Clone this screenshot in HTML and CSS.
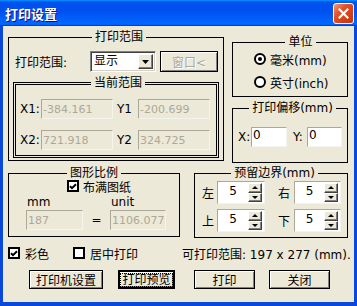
FILE: index.html
```html
<!DOCTYPE html>
<html lang="zh-CN">

<head>
	<meta charset="UTF-8">
	<title>打印设置</title>
	<link rel="stylesheet" href="styles.css">
</head>

<body>

	<div class="window">

	<!-- Title bar -->
	<div class="titlebar">
		<span class="title">打印设置</span>
		<span class="close-btn">
			<svg width="11" height="11" viewBox="0 0 11 11"><path d="M1.5 1.5L9.5 9.5M9.5 1.5L1.5 9.5" stroke="#fff" stroke-width="2.2" stroke-linecap="square"/></svg>
		</span>
	</div>

	<div class="client">

	<!-- Print range / unit / offset -->
	<div class="top-section">
		<fieldset class="group group-range">
			<legend>打印范围</legend>
			<div class="range-row">
				<span class="range-label">打印范围:</span>
				<div class="combo">
					<span class="combo-text">显示</span>
					<span class="combo-btn"><svg width="7" height="4" viewBox="0 0 7 4"><path d="M0 0H7L3.5 4Z" fill="#000"/></svg></span>
				</div>
				<button class="btn btn-window" disabled>窗口&lt;</button>
			</div>
			<fieldset class="group group-current">
				<legend>当前范围</legend>
				<div class="coord-row">
					<span class="coord-label">X1:</span>
					<input class="field field-off coord-field" value="-384.161" disabled>
					<span class="coord-label coord-label-y">Y1</span>
					<input class="field field-off coord-field" value="-200.699" disabled>
				</div>
				<div class="coord-row coord-row-2">
					<span class="coord-label">X2:</span>
					<input class="field field-off coord-field" value="721.918" disabled>
					<span class="coord-label coord-label-y">Y2</span>
					<input class="field field-off coord-field" value="324.725" disabled>
				</div>
			</fieldset>
		</fieldset>

		<div class="right-col">
			<fieldset class="group group-unit">
				<legend>单位</legend>
				<div class="radio-row"><span class="radio radio-on"></span>毫米(mm)</div>
				<div class="radio-row radio-row-2"><span class="radio"></span>英寸(inch)</div>
			</fieldset>
			<fieldset class="group group-offset">
				<legend>打印偏移(mm)</legend>
				<div class="offset-row">
					<span class="offset-label">X:</span>
					<input class="field offset-field" value="0">
					<span class="offset-label offset-label-y">Y:</span>
					<input class="field offset-field offset-field-y" value="0">
				</div>
			</fieldset>
		</div>
	</div>

	<!-- Scale / margins -->
	<div class="mid-section">
		<fieldset class="group group-scale">
			<legend>图形比例</legend>
			<div class="fit-row">
				<span class="check"><svg width="8" height="7" viewBox="0 0 8 7"><path d="M1 3.2L3 5.2L7 1.2" fill="none" stroke="#000" stroke-width="2"/></svg></span>
				布满图纸
			</div>
			<div class="scale-row">
				<div class="scale-col scale-col-mm">
					<span class="scale-unit">mm</span>
					<input class="field field-off scale-field" value="187" disabled>
				</div>
				<span class="equals">=</span>
				<div class="scale-col">
					<span class="scale-unit">unit</span>
					<input class="field field-off scale-field scale-field-unit" value="1106.077" disabled>
				</div>
			</div>
		</fieldset>

		<fieldset class="group group-margin">
			<legend>预留边界(mm)</legend>
			<div class="margin-row">
				<span class="margin-label">左</span>
				<div class="spin"><span class="spin-val">5</span><span class="spin-btns"><span class="spin-btn spin-up"></span><span class="spin-btn spin-down"></span></span></div>
				<span class="margin-label margin-label-r">右</span>
				<div class="spin spin-r"><span class="spin-val">5</span><span class="spin-btns"><span class="spin-btn spin-up"></span><span class="spin-btn spin-down"></span></span></div>
			</div>
			<div class="margin-row margin-row-2">
				<span class="margin-label">上</span>
				<div class="spin"><span class="spin-val">5</span><span class="spin-btns"><span class="spin-btn spin-up"></span><span class="spin-btn spin-down"></span></span></div>
				<span class="margin-label margin-label-r">下</span>
				<div class="spin spin-r"><span class="spin-val">5</span><span class="spin-btns"><span class="spin-btn spin-up"></span><span class="spin-btn spin-down"></span></span></div>
			</div>
		</fieldset>
	</div>

	<!-- Options -->
	<div class="options-row">
		<span class="opt opt-color">
			<span class="check"><svg width="8" height="7" viewBox="0 0 8 7"><path d="M1 3.2L3 5.2L7 1.2" fill="none" stroke="#000" stroke-width="2"/></svg></span>
			彩色
		</span>
		<span class="opt opt-center"><span class="check"></span>居中打印</span>
		<span class="printable">可打印范围: 197 x 277 (mm).</span>
	</div>

	<!-- Buttons -->
	<div class="button-row">
		<button class="btn btn-setup">打印机设置</button>
		<button class="btn btn-default btn-preview"><span class="focus-rect">打印预览</span></button>
		<button class="btn btn-print">打印</button>
		<button class="btn btn-close">关闭</button>
	</div>

	</div>
	</div>

</body>

</html>
```

FILE: styles.css
```css
*
{
	box-sizing: border-box;
}

body
{
	margin: 0;
	font-family: "DejaVu Sans", "Noto Sans CJK SC", sans-serif;
	font-size: 12px;
	color: #000;
	background-color: #ece9d8;
}

.window
{
	width: 357px;
	height: 306px;
	display: flex;
	flex-direction: column;
}

/* title bar */
.titlebar
{
	height: 26px;
	display: flex;
	align-items: center;
	justify-content: space-between;
	padding: 1px 3px 0 5px;
	background: linear-gradient(180deg, #0997ff, #0053ee 8%, #0050ee 40%, #0066ff 88%, #0066ff 93%, #005bff 95%, #003dd7 96%, #003dd7);
}

.title
{
	color: white;
	font-family: "Noto Sans CJK SC", sans-serif;
	font-weight: bold;
	font-size: 13px;
	text-shadow: 1px 1px #0f1089;
}

.close-btn
{
	width: 21px;
	height: 21px;
	display: flex;
	justify-content: center;
	align-items: center;
	border: 1px solid white;
	border-radius: 3px;
	background: linear-gradient(135deg, #f29a7c 0%, #e2522a 35%, #d43f14 70%, #c0380f 100%);
}

.client
{
	flex: 1;
	border-style: solid;
	border-color: #0a48dc;
	border-width: 0 3px 4px 3px;
	padding: 4px 0 0 5px;
	background-color: #ece9d8;
}

/* group boxes */
.group
{
	margin: 0;
	padding: 0;
	min-width: 0;
	border: 1px solid #000;
}

.group legend
{
	margin: 0 auto;
	padding: 0 3px;
	line-height: 14px;
}

.top-section
{
	display: flex;
	align-items: flex-start;
	gap: 8px;
	height: 133px;
}

.group-range
{
	width: 216px;
	height: 131px;
	padding: 7px 0 0 6px;
}

.range-row
{
	display: flex;
	align-items: center;
	height: 21px;
}

.range-label
{
	width: 75px;
}

.combo
{
	width: 66px;
	height: 21px;
	display: flex;
	align-items: stretch;
	margin-right: 4px;
	padding: 2px;
	border: 1px solid;
	border-color: #808080 white white #808080;
	box-shadow: inset 1px 1px #404040, inset -1px -1px #d4d0c8;
	background-color: white;
}

.combo-text
{
	flex: 1;
	padding-left: 1px;
	line-height: 15px;
}

.combo-btn
{
	width: 15px;
	display: flex;
	justify-content: center;
	align-items: center;
	background-color: #ece9d8;
	border: 1px solid;
	border-color: #fff #404040 #404040 #fff;
	box-shadow: inset -1px -1px #808080;
}

.btn
{
	height: 19px;
	padding: 0;
	font: inherit;
	color: #000;
	background-color: #ece9d8;
	border: 1px solid #000;
	box-shadow: inset 1px 1px white, inset -1px -1px #808080;
}

.btn-window
{
	width: 58px;
	height: 21px;
	color: #aca899;
	text-shadow: 1px 1px white;
}

.group-current
{
	width: 206px;
	height: 82px;
	margin: 4px 0 0 -2px;
	padding: 9px 0 0 4px;
	border: 3px double #000;
}

.coord-row
{
	display: flex;
	align-items: center;
	height: 20px;
}

.coord-row-2
{
	margin-top: 11px;
}

.coord-label
{
	width: 21px;
}

.coord-label-y
{
	margin-left: 4px;
}

.field
{
	height: 20px;
	padding: 0 1px;
	font: inherit;
	font-size: 11px;
	color: #000;
	background-color: white;
	border: 1px solid;
	border-color: #aca899 #f4f3ee #f4f3ee #aca899;
	outline: none;
	line-height: 14px;
}

.field-off
{
	color: #aca899;
	background-color: #ece9d8;
}

.coord-field
{
	width: 72px;
}

.right-col
{
	width: 116px;
	display: flex;
	flex-direction: column;
}

.group-unit
{
	height: 62px;
	margin-top: 5px;
	padding: 4px 0 0 21px;
}

.radio-row
{
	display: flex;
	align-items: center;
	gap: 4px;
	height: 12px;
}

.radio-row-2
{
	margin-top: 11px;
}

.radio
{
	width: 12px;
	height: 12px;
	display: flex;
	justify-content: center;
	align-items: center;
	border: 2px solid #000;
	border-radius: 50%;
	background-color: white;
}

.radio-on::after
{
	content: "";
	width: 4px;
	height: 4px;
	border-radius: 50%;
	background-color: #000;
}

.group-offset
{
	height: 62px;
	margin-top: 4px;
	padding: 12px 0 0 5px;
}

.offset-row
{
	display: flex;
	align-items: center;
}

.offset-label
{
	width: 13px;
}

.offset-label-y
{
	width: 14px;
	margin-left: 6px;
}

.offset-field
{
	width: 36px;
	height: 20px;
	padding-bottom: 5px;
	font-size: 12px;
}

.offset-field-y
{
	width: 35px;
}

/* scale + margins */
.mid-section
{
	display: flex;
	gap: 14px;
	margin-top: 3px;
}

.group-scale
{
	width: 172px;
	height: 71px;
}

.fit-row
{
	display: flex;
	align-items: center;
	gap: 4px;
	height: 12px;
	margin-left: 58px;
}

.check
{
	width: 12px;
	height: 12px;
	display: flex;
	justify-content: center;
	align-items: center;
	border: 2px solid #000;
	background-color: white;
}

.scale-row
{
	display: flex;
	align-items: flex-end;
	margin-top: 3px;
}

.scale-col
{
	display: flex;
	flex-direction: column;
}

.scale-col-mm
{
	margin-left: 17px;
}

.scale-unit
{
	line-height: 14px;
	margin-bottom: 1px;
	padding-left: 1px;
}

.scale-field
{
	width: 57px;
}

.scale-field-unit
{
	width: 56px;
}

.equals
{
	width: 27px;
	line-height: 20px;
	text-align: center;
}

.group-margin
{
	width: 154px;
	height: 72px;
	padding: 1px 0 0 7px;
}

.margin-row
{
	display: flex;
	align-items: center;
	height: 23px;
}

.margin-row-2
{
	margin-top: 5px;
}

.margin-label
{
	width: 15px;
}

.margin-label-r
{
	width: 16px;
	margin-left: 13px;
}

.spin
{
	width: 48px;
	height: 23px;
	display: flex;
	padding: 1px 2px 1px 0;
	border: 1px solid;
	border-color: #aca899 #f4f3ee #f4f3ee #aca899;
	background-color: white;
}

.spin-r
{
	width: 47px;
}

.spin-val
{
	flex: 1;
	text-align: center;
	line-height: 14px;
	padding-top: 1px;
}

.spin-btns
{
	width: 14px;
	display: flex;
	flex-direction: column;
}

.spin-btn
{
	flex: 1;
	display: flex;
	justify-content: center;
	align-items: center;
	background-color: #ece9d8;
	border: 1px solid;
	border-color: white #404040 #404040 white;
	box-shadow: inset -1px -1px #808080;
}

.spin-up::after
{
	content: "";
	border-left: 3px solid transparent;
	border-right: 3px solid transparent;
	border-bottom: 3px solid #000;
}

.spin-down::after
{
	content: "";
	border-left: 3px solid transparent;
	border-right: 3px solid transparent;
	border-top: 3px solid #000;
}

/* options */
.options-row
{
	display: flex;
	align-items: center;
	height: 12px;
	margin-top: 9px;
}

.opt
{
	display: flex;
	align-items: center;
	gap: 5px;
}

.opt-color
{
	width: 65px;
}

.opt-center
{
	width: 109px;
}

/* buttons */
.button-row
{
	display: flex;
	margin-top: 11px;
	padding-left: 21px;
}

.btn-setup
{
	width: 74px;
}

.btn-preview
{
	width: 57px;
	margin-left: 15px;
}

.btn-default
{
	border-width: 2px;
	display: flex;
	justify-content: center;
	align-items: center;
}

.focus-rect
{
	padding: 0 1px;
	border: 1px dotted #000;
	line-height: 12px;
}

.btn-print
{
	width: 61px;
	margin-left: 19px;
}

.btn-close
{
	width: 61px;
	margin-left: 14px;
}
```
